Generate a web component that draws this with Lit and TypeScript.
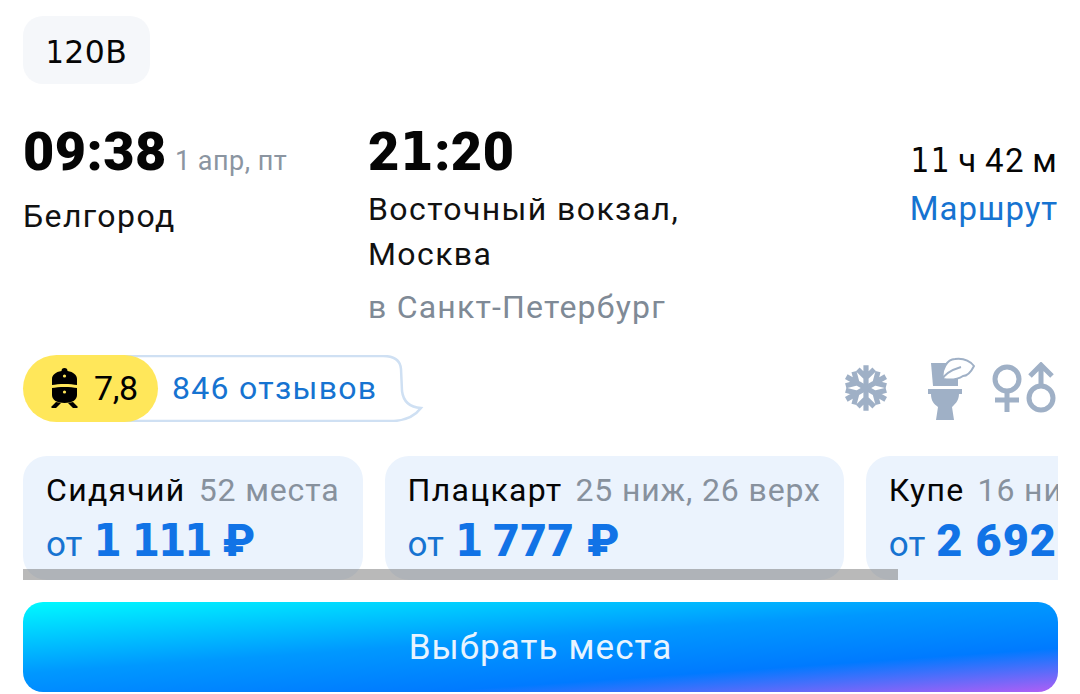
import { LitElement, html, css, svg } from "lit";
import { customElement } from "lit/decorators.js";

const tickets = [
  { name: "Сидячий", seats: "52 места", price: "1 111 ₽" },
  { name: "Плацкарт", seats: "25 ниж, 26 верх", price: "1 777 ₽" },
  { name: "Купе", seats: "16 ниж, 16 верх", price: "2 692 ₽" },
];

const arm = svg`<path d="M12 1.5V12M8.2 3.4L12 7.2 15.8 3.4"/>`;

/** The reference's numeral 1 has a foot serif, so it is set in a face that has one. */
const ones = (text: string) =>
  text.split(/(1)/).map((part) => (part === "1" ? html`<span class="one">1</span>` : part));

@customElement("app-root")
export class AppRoot extends LitElement {
  static styles = css`
    :host { display: block; width: 1080px; height: 694px; overflow: hidden; background: #fff; font-family: Roboto, "Noto Sans", sans-serif; color: #050505; }
    .one { font-family: "DejaVu Sans Condensed", "DejaVu Sans", sans-serif; font-stretch: condensed; }
    .page { display: flex; flex-direction: column; padding: 16px 22px 0 23px; }
    .badge { align-self: flex-start; display: flex; align-items: center; justify-content: center; box-sizing: border-box; width: 127px; height: 68px; padding-top: 3px; border-radius: 20px; background: #f5f7fa; font-family: "DejaVu Sans", sans-serif; font-size: 31.5px; letter-spacing: 0.4px; }
    .route { display: grid; grid-template-columns: 345px 1fr auto; margin-top: 38px; height: 216px; }
    .time { font-weight: 900; font-size: 54px; line-height: 60px; font-variant-numeric: tabular-nums; letter-spacing: .5px; }
    .timeline { display: flex; align-items: baseline; gap: 8px; }
    .date { font-size: 27px; color: #8b95a1; letter-spacing: .5px; }
    .city { font-size: 32px; line-height: 45px; letter-spacing: 1.4px; color: #111; }
    .from { margin-top: 12px; }
    .to { margin-top: 5px; }
    .via { font-size: 32px; color: #7f8a96; margin-top: 10px; line-height: 40px; letter-spacing: 1.2px; }
    .dur { display: flex; flex-direction: column; align-items: flex-end; padding-top: 21px; }
    .dur b { font-weight: 400; font-size: 33px; line-height: 36px; letter-spacing: 1.3px; word-spacing: -2px; }
    .dur a { font-size: 33px; line-height: 40px; margin-top: 10px; color: #1673d1; letter-spacing: .9px; }
    .meta { display: flex; justify-content: space-between; align-items: center; height: 68px; margin-top: 16px; }
    .rating { position: relative; display: flex; align-items: center; width: 380px; height: 67px; }
    .bubble { position: absolute; left: 0; top: 0; }
    .score { position: relative; display: flex; align-items: center; gap: 16px; box-sizing: border-box; width: 135px; height: 67px; padding-left: 28px; border-radius: 34px; background: #ffe75a; font-size: 34px; letter-spacing: -.4px; color: #000; }
    .reviews { position: relative; margin-left: 14px; font-size: 32px; color: #1673d1; letter-spacing: 1.3px; }
    .amen { display: flex; align-items: center; }
    .scroller { display: flex; gap: 22px; overflow: hidden; margin-top: 34px; height: 124px; position: relative; }
    .card { flex: none; box-sizing: border-box; height: 124px; padding: 15px 23px 0; border-radius: 24px; background: #ebf3fd; white-space: nowrap; }
    .head { font-size: 32px; line-height: 38px; letter-spacing: 1.3px; display: flex; gap: 13px; }
    .head span { color: #87919d; letter-spacing: .87px; }
    .price { font-size: 35px; line-height: 48px; color: #1673d1; display: flex; align-items: baseline; gap: 11px; margin-top: 8px; }
    .price b { font-weight: 900; font-size: 45px; color: #1173e6; letter-spacing: 1px; }
    .price b .one { letter-spacing: -2px; }
    .bar { position: absolute; left: 0; bottom: 0; height: 11px; width: 875px; background: rgba(120,120,120,.52); }
    .btn { display: flex; align-items: center; justify-content: center; margin-top: 22px; height: 90px; border-radius: 20px; color: #e8f4ff; font-size: 35px; letter-spacing: 1.1px; background: linear-gradient(176deg, #00faff 0%, #0098ff 44%, #007aff 73%, #b05ef5 100%); }
  `;

  render() {
    return html`<div class="page">
      <div class="badge">${ones("120В")}</div>
      <div class="route">
        <div>
          <div class="timeline"><span class="time">09:38</span><span class="date">1 апр, пт</span></div>
          <div class="city from">Белгород</div>
        </div>
        <div>
          <div class="time">${ones("21:20")}</div>
          <div class="city to">Восточный вокзал,<br />Москва</div>
          <div class="via">в Санкт-Петербург</div>
        </div>
        <div class="dur"><b>${ones("11 ч 42 м")}</b><a>Маршрут</a></div>
      </div>
      <div class="meta">
        <div class="rating">
          <svg class="bubble" width="402" height="67" viewBox="0 0 402 67" fill="none"><path d="M40 1H360Q377 1 378 14L379 36Q381 52 398 53Q389 65 371 66H40" stroke="#cfe0f3" stroke-width="2.5"/></svg>
          <div class="score">
            <svg width="27" height="40" viewBox="0 0 27 40"><g fill="#000"><path d="M13.5 0a3 3 0 0 1 3 3c6 1 9.500 4 9.500 8v6c-6-1.500-19-1.500-25 0v-6c0-4 3.500-7 9.500-8a3 3 0 0 1 3-3z"/><path d="M1 20c6-1.500 19-1.500 25 0v7c0 5-5 8-12.500 8S1 32 1 27z"/><path d="M5 34l-5 5 1 1h4l5-5zM22 34l5 5-1 1h-4l-5-5z"/></g><circle cx="13.500" cy="8" r="1.600" fill="#ffe75a"/><circle cx="13.500" cy="24" r="1.600" fill="#ffe75a"/></svg>
            7,8
          </div>
          <div class="reviews">846 отзывов</div>
        </div>
        <div class="amen">
          <svg width="52" height="52" viewBox="0 0 24 24" fill="none" stroke="#9fb0c6" stroke-width="2.400">${[0, 60, 120, 180, 240, 300].map((r) => svg`<g transform="rotate(${r} 12 12)">${arm}</g>`)}</svg>
          <svg width="50" height="66" viewBox="0 0 50 66" style="margin-left:33px" fill="#9fb0c6"><path d="M6 8H24L33 20V31H8Z"/><path d="M3 34H37V39H3Z"/><path d="M6 39H34C34 46 29 50 27 52L29 65H11L13 52C9 49 6 46 6 39Z"/><path d="M18 24C16 15 22 4 30 4 38 3 45 6 49 11 46 17 42 21 38 21 32 25 24 25 18 24Z" fill="#fff" stroke="#9fb0c6" stroke-width="2"/><path d="M16 26C19 19 26 15 36 12" fill="none" stroke="#9fb0c6" stroke-width="2"/></svg>
          <svg width="68" height="52" viewBox="0 0 68 52" style="margin-left:15px" fill="none" stroke="#9fb0c6" stroke-width="5"><circle cx="17" cy="17" r="12"/><path d="M17 29V50M5 38H29"/><circle cx="51" cy="36" r="12"/><path d="M51 24V5M40 14L51 3 62 14"/></svg>
        </div>
      </div>
      <div class="scroller">
        ${tickets.map(
          (t) => html`<div class="card">
            <div class="head">${t.name}<span>${t.seats}</span></div>
            <div class="price">от<b>${ones(t.price)}</b></div>
          </div>`
        )}
        <div class="bar"></div>
      </div>
      <div class="btn">Выбрать места</div>
    </div>`;
  }
}
